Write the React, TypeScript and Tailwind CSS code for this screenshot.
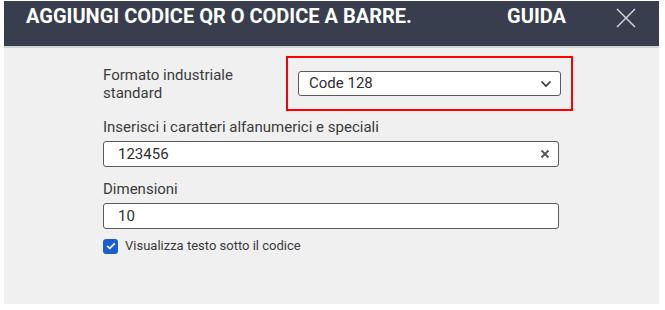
import React, { useState } from 'react'

export default function App() {
  const [chars, setChars] = useState('123456')
  const [size, setSize] = useState('10')
  const [showText, setShowText] = useState(true)

  return (
    <div className="h-[310px] w-[665px] bg-white pl-[4px] pt-[1px] font-['Roboto',sans-serif]">
      <div className="flex h-[303px] w-[655px] flex-col bg-[#f0f0f0]">
        {/* Header */}
        <div className="flex h-[47px] shrink-0 items-start border-b-2 border-[#d2d3d6] bg-[#383e4e] pt-[3px] text-white">
          <h2 className="ml-[22px] text-[20px] font-bold leading-[24px]">
            AGGIUNGI CODICE QR O CODICE A BARRE.
          </h2>
          <span className="ml-auto text-[20px] font-bold leading-[24px]">GUIDA</span>
          <button className="ml-[50px] mr-[23px] mt-[4px] text-[#d8dae0]">
            <svg width="20" height="20" viewBox="0 0 20 20" fill="none" stroke="currentColor" strokeWidth="1.4">
              <path d="M1 1 L19 19 M19 1 L1 19" />
            </svg>
          </button>
        </div>

        {/* Form */}
        <div className="flex w-[555px] flex-col pl-[99px] text-[15px] text-[#3b3b3b]">
          <div className="mt-[8px] flex items-center">
            <label className="w-[183px] leading-[18px]">Formato industriale standard</label>
            <div className="-mr-[14px] flex-1 border-2 border-[#ff0000] px-[10px] py-[13px]">
              <div className="flex h-[25px] items-center rounded-[3px] border border-[#5a5a5a] bg-white pl-[10px] pr-[8px]">
                <span className="flex-1 text-[#2f2f2f]">Code 128</span>
                <svg width="12" height="8" viewBox="0 0 12 8" fill="none" stroke="#333" strokeWidth="1.6">
                  <path d="M1.5 1.5 L6 6 L10.5 1.5" />
                </svg>
              </div>
            </div>
          </div>

          <label className="mt-[6px] leading-[20px]">Inserisci i caratteri alfanumerici e speciali</label>
          <div className="mt-[4px] flex h-[26px] items-center rounded-[3px] border border-[#5a5a5a] bg-white pl-[14px] pr-[8px]">
            <input
              value={chars}
              onChange={(e) => setChars(e.target.value)}
              className="min-w-0 flex-1 bg-transparent text-[#2f2f2f] outline-none"
            />
            <button onClick={() => setChars('')} className="text-[#555]">
              <svg width="10" height="10" viewBox="0 0 10 10" fill="none" stroke="currentColor" strokeWidth="1.8">
                <path d="M1.5 1.5 L8.5 8.5 M8.5 1.5 L1.5 8.5" />
              </svg>
            </button>
          </div>

          <label className="mt-[12px] leading-[20px]">Dimensioni</label>
          <div className="mt-[4px] flex h-[26px] items-center rounded-[3px] border border-[#5a5a5a] bg-white pl-[14px]">
            <input
              value={size}
              onChange={(e) => setSize(e.target.value)}
              className="min-w-0 flex-1 bg-transparent text-[#2f2f2f] outline-none"
            />
          </div>

          <label className="mt-[9px] flex items-center gap-[7px] text-[13px] leading-[16px]">
            <span
              onClick={() => setShowText(!showText)}
              className={`flex h-[15px] w-[15px] items-center justify-center rounded-[3px] ${
                showText ? 'bg-[#1a5fd0]' : 'border border-[#555] bg-white'
              }`}
            >
              {showText && (
                <svg width="10" height="8" viewBox="0 0 10 8" fill="none" stroke="white" strokeWidth="1.6">
                  <path d="M1.2 4 L3.8 6.4 L8.8 1.4" />
                </svg>
              )}
            </span>
            Visualizza testo sotto il codice
          </label>
        </div>
      </div>
    </div>
  )
}
